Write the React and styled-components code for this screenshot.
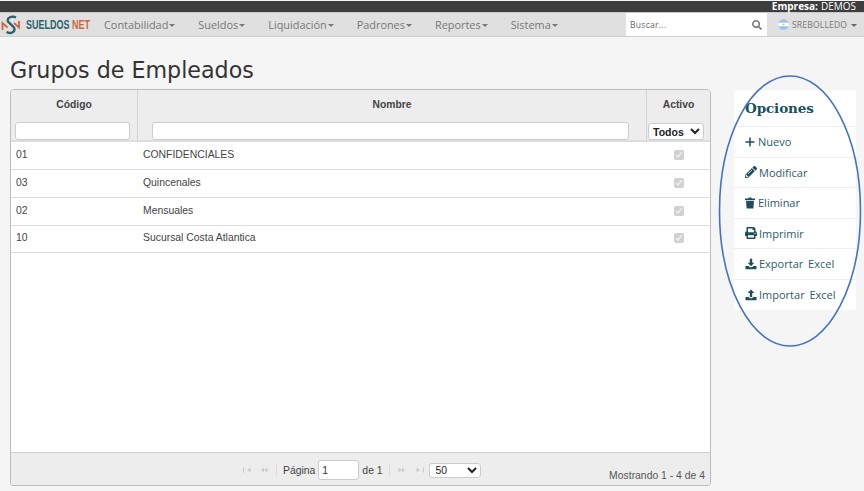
import React from "react";
import styled, { createGlobalStyle } from "styled-components";
import { FaPencilAlt, FaPrint, FaSearch } from "react-icons/fa";

const Global = createGlobalStyle`
  html, body { margin: 0; padding: 0; background: #f5f5f5; }
  body { width: 864px; height: 491px; overflow: hidden; font-family: "Liberation Sans", Arial, sans-serif; }
`;
const Frame = styled.div`position: relative; width: 864px; height: 491px; padding-top: 1px; box-sizing: border-box; background: #f5f5f5;`;
const TopStrip = styled.div`
  height: 11px; background: #3d3d3d; color: #fff; display: flex; justify-content: flex-end; align-items: center;
  padding-right: 8px; font: 10px/11px "Open Sans", sans-serif; b { margin-right: 3px; }
`;
const Nav = styled.nav`
  height: 25px; box-sizing: border-box; background: #e0e0e0; border-top: 1px solid #c9c9c9; border-bottom: 1px solid #d0d0d0; display: flex; align-items: stretch;
`;
const Brand = styled.div`width: 104px; display: flex; align-items: center; padding-left: 1px; box-sizing: border-box; flex: none; svg { flex: none; }`;
const BrandText = styled.span`
  font: 700 13px "Liberation Sans", sans-serif; color: #29616c; margin-left: 5px; white-space: nowrap; display: inline-block; transform: scaleX(.69); transform-origin: left center;
  em { font-style: normal; color: #c8673f; margin-left: 4px; }
`;
const Menu = styled.div`display: flex; width: 522px; flex: none; align-items: center;`;
const MenuItem = styled.span`
  font: 10.9px "Open Sans", sans-serif; color: #777; margin-right: ${p => p.$gap}px; white-space: nowrap; display: flex; align-items: center;
`;
const Caret = styled.i`
  display: inline-block; width: 0; height: 0; margin-left: 1px; margin-top: 1px; border-top: 3px solid ${p => p.$c || "#777"}; border-left: 3px solid transparent; border-right: 3px solid transparent;
`;
const Search = styled.div`
  width: 141px; flex: none; background: #fff; display: flex; align-items: center; justify-content: space-between; padding: 0 5px 0 4px; box-sizing: border-box;
  font: 8.5px "Open Sans", sans-serif; color: #666; letter-spacing: .3px; svg { color: #777; }
`;
const User = styled.div`
  flex: 1; display: flex; align-items: center; padding-left: 11px; font: 8.6px "Open Sans", sans-serif; color: #777; letter-spacing: .15px; gap: 3px;
`;
const Content = styled.div`padding: 0 8px 0 10px; display: flex; align-items: flex-start;`;
const Main = styled.main`width: 701px; flex: none;`;
const Title = styled.h1`
  margin: 0; padding-top: 16px; height: 34px; font: 400 22.2px/34px "DejaVu Sans", Verdana, sans-serif; color: #333; white-space: nowrap; box-sizing: content-box;
`;
const Grid = styled.div`
  height: 397px; box-sizing: border-box; margin-top: 2px; border: 1px solid #bdbdbd; border-radius: 4px 4px 3px 3px; background: #fff; display: flex; flex-direction: column; overflow: hidden;
`;
const HeadRow = styled.div`display: flex; height: 52px; flex: none; background: #ededed; border-bottom: 2px solid #ddd; box-sizing: border-box;`;
const HeadCell = styled.div`
  width: ${p => p.$w}px; ${p => p.$flex && "flex: 1;"} box-sizing: border-box; display: flex; flex-direction: column; align-items: center;
  border-right: ${p => (p.$last ? "0" : "1px solid #d6d6d6")};
`;
const HeadLabel = styled.div`font: 700 10.3px/14px "Liberation Sans", sans-serif; color: #444; height: 14px; margin-top: 8px; margin-bottom: 10px;`;
const FilterInput = styled.input`
  align-self: stretch; height: 19px; box-sizing: border-box; border: 1px solid #ccc; border-radius: 3px; background: #fff; padding: 0; margin: 0 ${p => p.$r}px 0 ${p => p.$l}px; outline: none; min-width: 0;
`;
const FilterSelect = styled.select`
  width: 56px; height: 17px; box-sizing: border-box; font: 700 10.5px "Liberation Sans", sans-serif; color: #222; border: 1px solid #ccc; border-radius: 3px; background-color: #fff; padding: 0; margin: 1px 6px 0 1px; outline: none;
`;
const Rows = styled.div`flex: 1; min-height: 0;`;
const Row = styled.div`display: flex; height: ${p => p.$h}px; box-sizing: border-box; border-bottom: 1px solid #ddd; align-items: center; font: 10.4px "Liberation Sans", sans-serif; color: #444;`;
const CodeCell = styled.div`width: 127px; padding-left: 5px; box-sizing: border-box; position: relative; top: -1px;`;
const NameCell = styled.div`flex: 1; padding-left: 5px; position: relative; top: -1px;`;
const ActiveCell = styled.div`width: 63px; display: flex; justify-content: center; input { width: 10px; height: 10px; margin: 0 0 1px; }`;
const Footer = styled.div`
  height: 33px; flex: none; background: #ededed; border-top: 1px solid #d0d0d0; box-sizing: border-box; display: flex; align-items: center; padding-top: 2px; font: 10.4px "Liberation Sans", sans-serif; color: #444; position: relative;
`;
const Pager = styled.div`display: flex; align-items: center; margin-left: 232px; height: 100%;`;
const PagerArrows = styled.span`display: flex; gap: ${p => p.$g}px; width: ${p => p.$w}px; svg { display: block; }`;
const Sep = styled.span`width: 1px; height: 13px; background: #ddd; margin: 0 ${p => p.$r}px 0 ${p => p.$l}px;`;
const PageInput = styled.input`
  width: 41px; height: 20px; box-sizing: border-box; margin: 0 3px; border: 1px solid #ccc; border-radius: 3px; background: #fff; padding: 0 3px; font: 10.4px "Liberation Sans", sans-serif; color: #333; outline: none;
`;
const PageSize = styled.select`
  width: 52px; height: 15px; box-sizing: border-box; font: 10.4px "Liberation Sans", sans-serif; color: #222; border: 1px solid #ccc; border-radius: 3px; background-color: #fff; padding: 0 0 0 2px; outline: none;
`;
const Showing = styled.div`position: absolute; right: 5px; bottom: 4px; font: 10.4px "Liberation Sans", sans-serif; color: #555;`;
const Side = styled.aside`width: 122px; margin-left: 23px; margin-top: 53px; background: #fff; border-radius: 3px; flex: none;`;
const SideHead = styled.h2`
  margin: 0; height: 37px; box-sizing: border-box; padding: 9px 0 0 11px; font: 700 13.5px/19px "DejaVu Serif", serif; color: #17515c; border-bottom: 1px solid #eee; letter-spacing: -.1px;
`;
const SideRow = styled.div`
  height: 30.5px; box-sizing: border-box; display: flex; align-items: center; padding-left: 11px; gap: 2px; font: 11px "Open Sans", sans-serif; word-spacing: 2px; color: #2c5c67; border-bottom: ${p => (p.$last ? "0" : "1px solid #eee")}; white-space: nowrap;
  svg { flex: none; color: #1c4f5b; }
`;
const Ellipse = styled.svg`position: absolute; left: 716px; top: 73px; pointer-events: none;`;

const Logo = () => (
  <svg width="20" height="20" viewBox="0 0 20 20" fill="none">
    <path d="M1.5 15 V8 L6.5 12.5" stroke="#c8673f" strokeWidth="1.8"/>
    <path d="M13 8 L18 12.5 V6" stroke="#c8673f" strokeWidth="1.8"/>
    <path d="M15 2.5 C11 .5 5.5 2.5 7 6.5 L13 12.5 C15 16.5 10 19.5 5.5 17" stroke="#29616c" strokeWidth="2.3"/>
  </svg>
);
const Flag = () => (
  <svg width="11" height="11" viewBox="0 0 11 11">
    <clipPath id="fl"><circle cx="5.5" cy="5.5" r="5.2"/></clipPath>
    <g clipPath="url(#fl)">
      <rect width="11" height="11" fill="#8fc4ec"/>
      <rect y="3.7" width="11" height="3.6" fill="#fff"/>
      <circle cx="5.5" cy="5.5" r="1.1" fill="#f0c040"/>
    </g>
  </svg>
);
const Plus = () => (
  <svg width="10" height="10" viewBox="0 0 10 10" style={{ marginRight: 1 }}>
    <path d="M5 .5 V9.5 M.5 5 H9.5" stroke="currentColor" strokeWidth="1.5"/>
  </svg>
);
const Trash = () => (
  <svg width="10" height="12" viewBox="0 0 10 12" fill="currentColor" style={{ marginRight: 1 }}>
    <path d="M0 1.6 H3.2 L3.8 .5 H6.2 L6.8 1.6 H10 V3 H0 Z"/>
    <path d="M1 3.7 H9 L8.4 11.6 H1.6 Z"/>
  </svg>
);
const Tray = ({ up }) => (
  <svg width="12" height="12" viewBox="0 0 12 12" fill="currentColor">
    <path d={up ? "M6 .5 L9.3 4 H7.2 V8 H4.8 V4 H2.7 Z" : "M4.8 .8 H7.2 V4.8 H9.3 L6 8.3 L2.7 4.8 H4.8 Z"}/>
    <path d="M.5 8 H3.6 L5 9.3 H7 L8.4 8 H11.5 V11.3 H.5 Z"/>
  </svg>
);
const PagerIcon = ({ dir, end }) => (
  <svg width="8" height="6" viewBox="0 0 8 6" fill="#ccc">
    {dir === "l"
      ? <>{end ? <rect x="0" y="0.5" width="1.2" height="5"/> : <path d="M4 0.5 V5.5 L1 3 Z"/>}<path d="M7.5 0.5 V5.5 L4 3 Z"/></>
      : <><path d="M.5 0.5 V5.5 L4 3 Z"/>{end ? <rect x="6.8" y="0.5" width="1.2" height="5"/> : <path d="M4 0.5 V5.5 L7 3 Z"/>}</>}
  </svg>
);

const menus = [["Contabilidad", 23], ["Sueldos", 23], ["Liquidación", 23], ["Padrones", 23], ["Reportes", 23], ["Sistema", 0]];
const rows = [["01", "CONFIDENCIALES", 28], ["03", "Quincenales", 28], ["02", "Mensuales", 27.5], ["10", "Sucursal Costa Atlantica", 27.5]];
const actions = [
  ["Nuevo", <Plus />],
  ["Modificar", <FaPencilAlt size={12} />],
  ["Eliminar", <Trash />],
  ["Imprimir", <FaPrint size={12} />],
  ["Exportar Excel", <Tray />],
  ["Importar Excel", <Tray up />],
];

export default function App() {
  return (
    <Frame>
      <Global />
      <TopStrip><b>Empresa:</b> DEMOS</TopStrip>
      <Nav>
        <Brand><Logo /><BrandText>SUELDOS<em>NET</em></BrandText></Brand>
        <Menu>
          {menus.map(([m, g]) => <MenuItem key={m} $gap={g}>{m}<Caret /></MenuItem>)}
        </Menu>
        <Search>Buscar...<FaSearch size={10} /></Search>
        <User><Flag />SREBOLLEDO<Caret $c="#666" /></User>
      </Nav>
      <Content>
        <Main>
          <Title>Grupos de Empleados</Title>
          <Grid>
            <HeadRow>
              <HeadCell $w={127}><HeadLabel>Código</HeadLabel><FilterInput $l={4} $r={7} /></HeadCell>
              <HeadCell $flex><HeadLabel>Nombre</HeadLabel><FilterInput $l={14} $r={17} /></HeadCell>
              <HeadCell $w={63} $last><HeadLabel>Activo</HeadLabel>
                <FilterSelect defaultValue="Todos"><option>Todos</option></FilterSelect>
              </HeadCell>
            </HeadRow>
            <Rows>
              {rows.map(([c, n, h]) => (
                <Row key={c} $h={h}>
                  <CodeCell>{c}</CodeCell>
                  <NameCell>{n}</NameCell>
                  <ActiveCell><input type="checkbox" checked disabled readOnly /></ActiveCell>
                </Row>
              ))}
            </Rows>
            <Footer>
              <Pager>
                <PagerArrows $w={33} $g={9}><PagerIcon dir="l" end /><PagerIcon dir="l" /></PagerArrows>
                <Sep $l={0} $r={6} />
                Página<PageInput defaultValue="1" />de 1
                <Sep $l={6} $r={8} />
                <PagerArrows $w={31} $g={10}><PagerIcon dir="r" /><PagerIcon dir="r" end /></PagerArrows>
                <PageSize defaultValue="50"><option>50</option></PageSize>
              </Pager>
              <Showing>Mostrando 1 - 4 de 4</Showing>
            </Footer>
          </Grid>
        </Main>
        <Side>
          <SideHead>Opciones</SideHead>
          {actions.map(([t, icon], i) => (
            <SideRow key={t} $last={i === actions.length - 1}>{icon}{t}</SideRow>
          ))}
        </Side>
      </Content>
      <Ellipse width="148" height="276" viewBox="0 0 148 276">
        <ellipse cx="74" cy="138" rx="70.5" ry="135" fill="none" stroke="#4472c4" strokeWidth="1.6" />
      </Ellipse>
    </Frame>
  );
}
